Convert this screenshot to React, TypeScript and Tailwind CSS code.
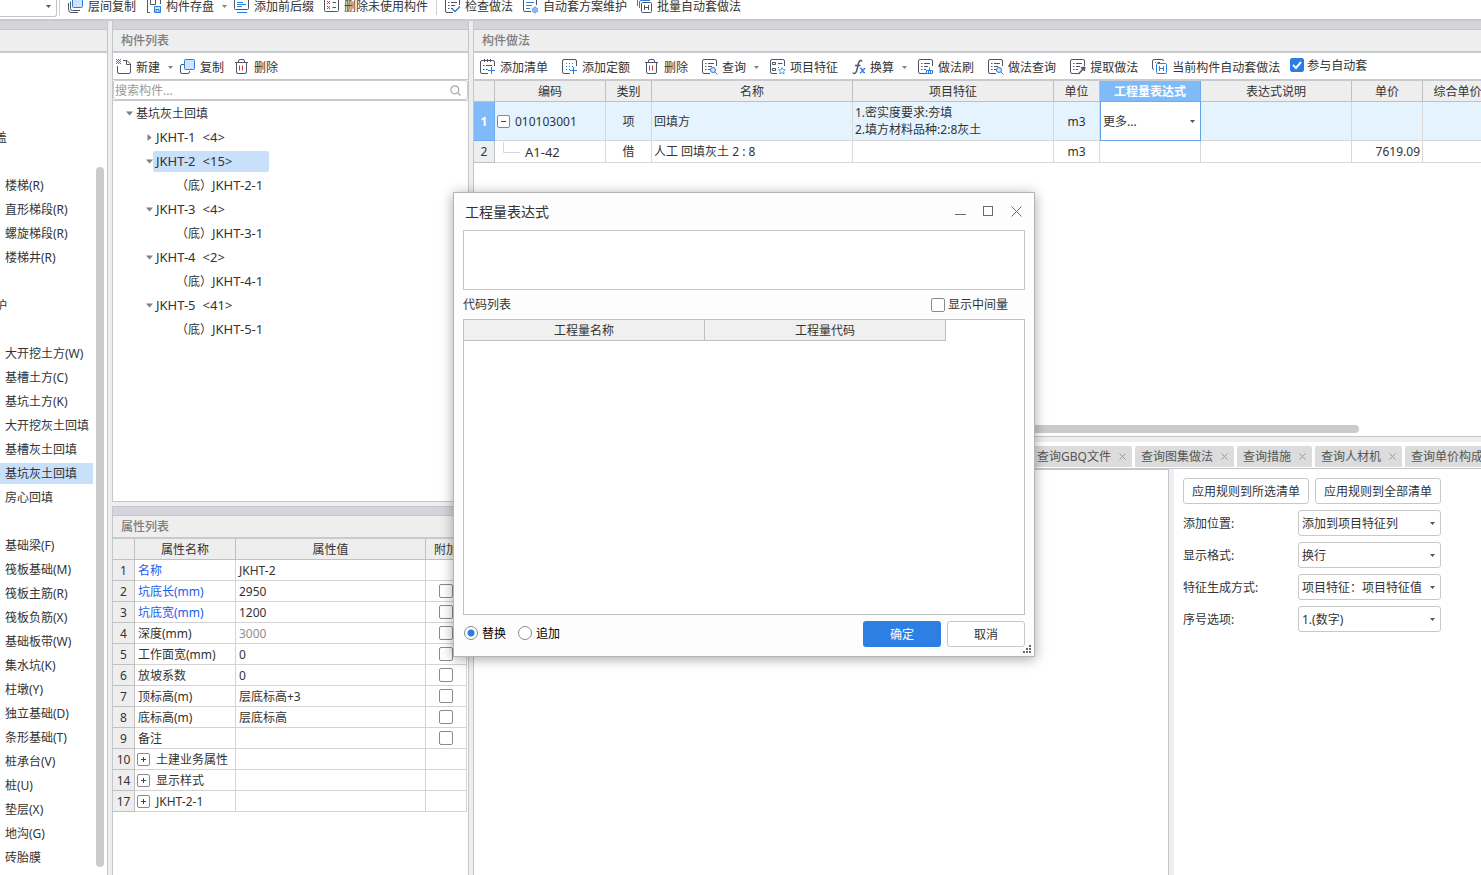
import { useState, type ReactNode } from "react";
import clsx from "clsx";

const INK = "#4d5567";
const BLUE = "#2a7de1";

/** 16px line icon, drawn on the pixel grid. */
function Icon({ width = 16, children }: { width?: number; children: ReactNode }) {
  return (
    <svg width={width} height="16" viewBox={`0 0 ${width} 16`} fill="none" stroke={INK} className="shrink-0">
      {children}
    </svg>
  );
}

/** Sheet outline with its lower right corner left open, plus the list lines. */
function OpenSheet() {
  return (
    <>
      <path d="M8 14.5H2Q.5 14.5 .5 13V2Q.5 .5 2 .5H13Q14.5 .5 14.5 2V7" />
      <path d="M3 4.5h1.5M6 4.5h6M3 7.5h1.5M6 7.5h4M3 10.5h1.5M6 10.5h2" />
    </>
  );
}

const icons = {
  layers: (
    <Icon>
      <path d="M.5 5v6Q.5 14.5 3 14.5h7M2.500 3.500v7Q2.500 12.500 4.500 12.500H12" />
      <rect x="4.500" y="-.5" width="10" height="10" rx="1" fill="#cfe3fc" stroke={BLUE} />
    </Icon>
  ),
  save: (
    <Icon>
      <path d="M4 14.500H1.500V.500H5M4.500 .500v6h5v-6M12 .500h2.500V6" />
      <path d="M8.500 8.500h6v6h-6zM10 14v-2.500h3V14" stroke={BLUE} fill="#cfe3fc" />
    </Icon>
  ),
  prefix: (
    <Icon>
      <rect x=".5" y=".5" width="14" height="11" rx="1" />
      <path d="M3 4.500h6M3 6.500h9M3 8.500h5M3 14.500h10" stroke={BLUE} />
    </Icon>
  ),
  unused: (
    <Icon>
      <rect x=".5" y=".5" width="14" height="13" rx="1" />
      <path d="M3 3l3 3M6 3l-3 3M3 8l3 3M6 8l-3 3" stroke="#e0322d" />
      <path d="M8.500 4.500h3.500M8.500 9.500h3.500" />
    </Icon>
  ),
  check: (
    <Icon>
      <OpenSheet />
      <path d="M7.500 11l2.500 2.500 5-5" stroke={BLUE} strokeWidth="1.500" />
    </Icon>
  ),
  plan: (
    <Icon>
      <path d="M8 13.500H2Q.5 13.500 .5 12V2Q.5 .5 2 .5H12Q13.500 .5 13.500 2V7" />
      <path d="M3 4.500h8M3 7.500h6M3 10.500h4" stroke={BLUE} />
      <circle cx="12" cy="12" r="2.500" stroke="#5b9cf0" fill="#cfe3fc" />
      <path d="M12 8v8M8.500 10l7 4M15.500 10l-7 4" stroke="#5b9cf0" strokeWidth=".6" />
    </Icon>
  ),
  batch: (
    <Icon>
      <path d="M.5 8V2Q.5 .5 2 .5h9M2.500 10V4Q2.500 2.500 4 2.500h9" stroke={BLUE} />
      <rect x="4.500" y="4.500" width="10" height="10" rx="1" fill="#fff" />
      <path d="M7.500 7v5M11.500 7v5M7.500 9.500h4" />
    </Icon>
  ),
  fresh: (
    <Icon>
      <path d="M7 1.500h4l3.500 3.500V13q0 1.500-1.500 1.500H3Q1.500 14.500 1.500 13V7M10.500 1.500v4h4" />
      <path d="M0 .5h5M0 2.500h5M0 4.500h5" stroke={BLUE} strokeDasharray="1 1" />
      <path d="M1 1.500h4M1 3.500h4" stroke={BLUE} strokeDasharray="1 1" />
    </Icon>
  ),
  copy: (
    <Icon>
      <path d="M4 5.500H2Q.5 5.500 .5 7v6q0 1.500 1.500 1.500h6q1.500 0 1.500-1.500v-1" />
      <rect x="4.500" y=".5" width="10" height="10" rx="1" fill="#cfe3fc" stroke={BLUE} />
    </Icon>
  ),
  trash: (
    <Icon>
      <path d="M1 3.500h13M4.500 3V2Q4.500 .5 6 .5h3q1.500 0 1.500 1.500V3M2.500 4v9Q2.500 14.500 4 14.500h7q1.500 0 1.500-1.500V4" />
      <path d="M5.500 6.500v5M8.500 6.500v5" stroke="#e0322d" />
    </Icon>
  ),
  addBill: (
    <Icon>
      <path d="M8 14.500H2Q.5 14.500 .5 13V3Q.5 1.500 2 1.500h11Q14.500 1.500 14.500 3v4M4.500 0v3M7.500 0v3M10.500 0v3" />
      <path d="M3 6.500h1.500M6 6.500h6M3 10.500h1.500M6 10.500h1.500" />
      <path d="M11.500 8v7M8 11.500h7" stroke={BLUE} />
    </Icon>
  ),
  addQuota: (
    <Icon>
      <path d="M8 14.500H2Q.5 14.500 .5 13V2Q.5 .5 2 .5h11Q14.500 .5 14.500 2v5" />
      <path d="M4 4.500h8M4 7.500h8M4 10.500h4" stroke={BLUE} strokeDasharray="1 2" />
      <path d="M11.500 8v7M8 11.500h7" stroke={BLUE} />
    </Icon>
  ),
  query: (
    <Icon>
      <OpenSheet />
      <circle cx="11" cy="11" r="2.500" stroke={BLUE} fill="#cfe3fc" />
      <path d="M13 13l2.500 2.500" stroke={BLUE} />
    </Icon>
  ),
  feature: (
    <Icon>
      <path d="M7 14.500H2Q.5 14.500 .5 13V2Q.5 .5 2 .5h11Q14.500 .5 14.500 2v5" />
      <path d="M2.500 3.500h3v2h-3zM2.500 9.500h3v2h-3zM8 4.500h4.500M8 8.500h1" />
      <path d="M12 8.500l1 2.200 2.300.2-1.700 1.600.5 2.400-2.100-1.200-2.100 1.200.5-2.400-1.700-1.600 2.300-.2z" stroke="#5b9cf0" fill="#fff" />
    </Icon>
  ),
  formula: (
    <Icon width={14}>
      <path d="M10 2.500Q9.500 1.200 8.300 1.500C6.500 2 6.300 5 5.500 8.500S4.200 14.500 2.500 14.500Q1.300 14.500 .8 13.500M3 6.500H8.500" strokeWidth="1.500" />
      <path d="M8 9.500q1.300-.8 2 1.500t2.800 3M13.300 9.500q-1.300 0-2.500 2t-2.800 2.500" stroke={BLUE} strokeWidth="1.400" />
    </Icon>
  ),
  brush: (
    <Icon>
      <OpenSheet />
      <path d="M8.500 14.500V11.500h6v3zM11.500 8.500v3M10.500 12v2M12.500 12v2" stroke={BLUE} />
    </Icon>
  ),
  extract: (
    <Icon>
      <OpenSheet />
      <path d="M8.500 15l4.500-5" strokeWidth="1.500" />
      <path d="M11 8.500l4-.5-.5 4z" fill={INK} />
    </Icon>
  ),
  auto: (
    <Icon>
      <path d="M2 10.500Q.5 10.500 .5 9V2Q.5 .5 2 .5h8q1.500 0 1.500 1.500M3 3.500h1M5.500 3.500H8" />
      <rect x="4.500" y="4.500" width="10" height="10" rx="1" fill="#fff" stroke={BLUE} />
      <path d="M7.500 7v5M11.500 7v5M7.500 9.500h4" stroke={BLUE} />
    </Icon>
  ),
};

type IconName = keyof typeof icons;

function Caret({ className = "" }: { className?: string }) {
  return (
    <svg width="5" height="3" viewBox="0 0 5 3" className={clsx("shrink-0", className)}>
      <path d="M0 0h5L2.500 3z" fill="currentColor" />
    </svg>
  );
}

function Tool({ icon, label, menu }: { icon: IconName; label: string; menu?: boolean }) {
  return (
    <button className={clsx("flex shrink-0 items-center gap-1 whitespace-nowrap", menu && "-mr-[3px]")}>
      {icons[icon]}
      <span className="pt-[2px]">{label}</span>
      {menu && <Caret className="ml-1 text-[#808080]" />}
    </button>
  );
}

function Check({ label, checked }: { label?: string; checked?: boolean }) {
  return (
    <span className="relative inline-flex size-[14px] shrink-0">
      <input
        type="checkbox"
        aria-label={label}
        defaultChecked={checked}
        className="peer size-[14px] appearance-none rounded-[2px] border border-[#8a8a8a] bg-white checked:border-[#2a7de1] checked:bg-[#2a7de1]"
      />
      <svg
        viewBox="0 0 14 14"
        className="pointer-events-none absolute inset-0 hidden peer-checked:block"
        fill="none"
        stroke="#fff"
        strokeWidth="2"
      >
        <path d="M3 7l3 3 5-6" />
      </svg>
    </span>
  );
}

function PanelTitle({ children }: { children?: ReactNode }) {
  return (
    <>
      <div className="h-[9px] shrink-0 border-b border-[#c3c6cc] bg-[#d3d5db]" />
      <h2 className="flex h-[23px] shrink-0 items-center border-b-2 border-[#c8cacd] bg-[#eeeeee] px-2 pt-px font-medium text-[#7d7d7d]">
        {children}
      </h2>
    </>
  );
}

function Expander({ open }: { open?: boolean }) {
  return (
    <button
      aria-label={open ? "收起" : "展开"}
      className="flex size-[13px] shrink-0 items-center justify-center rounded-[2px] border border-[#8a8a8a] bg-white"
    >
      <svg width="7" height="7" viewBox="0 0 7 7" stroke="#444" fill="none">
        <path d={open ? "M1 3.500h5" : "M1 3.500h5M3.500 1v5"} />
      </svg>
    </button>
  );
}

function TopBar() {
  return (
    <header className="flex h-[21px] shrink-0 items-end overflow-hidden border-b-2 border-[#c8cacd] bg-white">
      <div className="flex h-[26px] shrink-0 items-center gap-[10px]">
        <div className="relative flex h-[22px] w-[57px] items-center">
          <select aria-label="楼层" className="h-full w-full appearance-none rounded-r-[3px] border border-l-0 border-[#c4c4c4] bg-white">
            <option></option>
          </select>
          <Caret className="pointer-events-none absolute right-[6px] text-[#4d5567]" />
        </div>
        <span className="-ml-2 h-5 w-px bg-[#d0d0d0]" />
        <div className="-ml-[2px] flex gap-[10px]">
          <Tool icon="layers" label="层间复制" />
          <Tool icon="save" label="构件存盘" menu />
          <Tool icon="prefix" label="添加前后缀" />
          <Tool icon="unused" label="删除未使用构件" />
          <span className="-mx-[2px] w-px bg-[#d0d0d0]" />
          <Tool icon="check" label="检查做法" />
          <Tool icon="plan" label="自动套方案维护" />
          <Tool icon="batch" label="批量自动套做法" />
        </div>
      </div>
    </header>
  );
}

// Empty strings are the group headings whose names lie left of the visible part.
const categories = [
  "", "", "", "盖", "", "楼梯(R)", "直形梯段(R)", "螺旋梯段(R)", "楼梯井(R)", "", "护", "",
  "大开挖土方(W)", "基槽土方(C)", "基坑土方(K)", "大开挖灰土回填", "基槽灰土回填",
  "基坑灰土回填", "房心回填", "", "基础梁(F)", "筏板基础(M)", "筏板主筋(R)", "筏板负筋(X)",
  "基础板带(W)", "集水坑(K)", "柱墩(Y)", "独立基础(D)", "条形基础(T)", "桩承台(V)",
  "桩(U)", "垫层(X)", "地沟(G)", "砖胎膜",
];

function Sidebar() {
  const [active, setActive] = useState("基坑灰土回填");
  return (
    <aside className="flex w-[108px] shrink-0 flex-col border-r border-[#c3c6cc] bg-white">
      <PanelTitle />
      <div className="flex min-h-0 flex-1">
        <ul className="w-[93px] overflow-hidden">
          {categories.map((name, i) => (
            <li key={i} className="flex h-6 items-center">
              {name && (
                <button
                  onClick={() => setActive(name)}
                  className={clsx(
                    "flex h-[21px] w-full items-center whitespace-nowrap pt-px",
                    name.length === 1 ? "-ml-[5px]" : "pl-[5px]",
                    active === name && "bg-[#c9e0fa]",
                  )}
                >
                  {name}
                </button>
              )}
            </li>
          ))}
        </ul>
        <div className="mt-[114px] mb-2 ml-[3px] w-2 rounded-full bg-[#cbcbcb]" />
      </div>
    </aside>
  );
}

const tree = [
  { name: "JKHT-1", count: 4 },
  { name: "JKHT-2", count: 15, child: "JKHT-2-1" },
  { name: "JKHT-3", count: 4, child: "JKHT-3-1" },
  { name: "JKHT-4", count: 2, child: "JKHT-4-1" },
  { name: "JKHT-5", count: 41, child: "JKHT-5-1" },
];

function TreeArrow({ open }: { open?: boolean }) {
  return (
    <svg width="7" height="7" viewBox="0 0 7 7" fill="#7f7f7f" className="shrink-0">
      <path d={open ? "M0 1.500h7L3.500 5.500z" : "M1.500 0v7L5.500 3.500z"} />
    </svg>
  );
}

function ComponentList() {
  const [selected, setSelected] = useState("JKHT-2");
  return (
    <section className="flex h-[481px] shrink-0 flex-col border-x border-b border-[#c3c6cc] bg-white">
      <PanelTitle>构件列表</PanelTitle>
      <div className="flex h-[27px] shrink-0 items-center gap-[10px] border-b border-[#c3c6cc] px-[3px] pt-[2px]">
        <Tool icon="fresh" label="新建" menu />
        <Tool icon="copy" label="复制" />
        <Tool icon="trash" label="删除" />
      </div>
      <div className="relative flex h-5 shrink-0 items-center">
        <input
          aria-label="搜索构件"
          placeholder="搜索构件..."
          className="h-5 w-full rounded-[3px] border border-[#cccccc] px-px placeholder:text-[#9a9a9a] outline-none"
        />
        <svg width="11" height="11" viewBox="0 0 11 11" fill="none" stroke="#a8a8a8" className="absolute right-[7px]">
          <circle cx="4.800" cy="4.800" r="4" strokeWidth="1.200" />
          <path d="M8 8l2.500 2.500" strokeWidth="1.300" />
        </svg>
      </div>
      <ul className="flex-1 border-t border-[#c8c8c8] pl-[13px]">
        <li className="flex h-6 items-center gap-[3px]">
          <TreeArrow open />
          <span className="pt-[2px]">基坑灰土回填</span>
        </li>
        {tree.map(({ name, count, child }) => (
          <li key={name} className="pl-5">
            <div className="flex h-6 items-center">
              <TreeArrow open={!!child} />
              <button
                onClick={() => setSelected(name)}
                className={clsx(
                  "flex h-[21px] w-[116px] items-center gap-[7px] rounded-[2px] pl-[3px] text-[13px]",
                  selected === name && "bg-[#c9e0fa]",
                )}
              >
                <span>{name}</span>
                <span>&lt;{count}&gt;</span>
              </button>
            </div>
            {child && (
              <div className="h-6 pl-[30px] leading-6">
                （底）<span className="text-[13px]">{child}</span>
              </div>
            )}
          </li>
        ))}
      </ul>
    </section>
  );
}

type Prop = { no: number; name: string; value?: string; key?: boolean; muted?: boolean; box?: boolean; group?: boolean };

const props: Prop[] = [
  { no: 1, name: "名称", value: "JKHT-2", key: true },
  { no: 2, name: "坑底长(mm)", value: "2950", key: true, box: true },
  { no: 3, name: "坑底宽(mm)", value: "1200", key: true, box: true },
  { no: 4, name: "深度(mm)", value: "3000", muted: true, box: true },
  { no: 5, name: "工作面宽(mm)", value: "0", box: true },
  { no: 6, name: "放坡系数", value: "0", box: true },
  { no: 7, name: "顶标高(m)", value: "层底标高+3", box: true },
  { no: 8, name: "底标高(m)", value: "层底标高", box: true },
  { no: 9, name: "备注", box: true },
  { no: 10, name: "土建业务属性", group: true },
  { no: 14, name: "显示样式", group: true },
  { no: 17, name: "JKHT-2-1", group: true },
];

function PropertyList() {
  const head = "h-[21px] border-r border-b border-[#c0c0c0] bg-[#eeeeee] p-0 pt-[2px] font-normal";
  const cell = "h-[21px] border-r border-b border-[#d4d4d4] px-[3px] pt-[2px] pb-0";
  return (
    <section className="flex min-h-0 flex-1 flex-col overflow-hidden border-x border-t border-[#c3c6cc] bg-white">
      <PanelTitle>属性列表</PanelTitle>
      <table className="w-[354px] table-fixed border-separate border-spacing-0">
        <colgroup>
          <col className="w-[22px]" />
          <col className="w-[101px]" />
          <col className="w-[190px]" />
          <col className="w-[41px]" />
        </colgroup>
        <thead>
          <tr>
            <th className={head}></th>
            <th className={head}>属性名称</th>
            <th className={head}>属性值</th>
            <th className={head}>附加</th>
          </tr>
        </thead>
        <tbody>
          {props.map((p) => (
            <tr key={p.no}>
              <td className="h-[21px] border-r border-b border-[#c0c0c0] bg-[#eeeeee] p-0 pt-[2px] text-center">{p.no}</td>
              {p.group ? (
                <td className="h-[21px] border-r border-b border-[#d4d4d4] py-0 pr-0 pl-[2px]">
                  <span className="flex items-center gap-[6px] whitespace-nowrap">
                    <Expander />
                    <span className="pt-[2px]">{p.name}</span>
                  </span>
                </td>
              ) : (
                <td className={clsx(cell, p.key && "text-[#1660f0]")}>{p.name}</td>
              )}
              <td className={clsx(cell, p.muted && "text-[#8f8f8f]")}>{p.value}</td>
              <td className="h-[21px] border-r border-b border-[#d4d4d4] p-0">
                <span className="flex justify-center">{p.box && <Check label={`附加 ${p.name}`} />}</span>
              </td>
            </tr>
          ))}
        </tbody>
      </table>
    </section>
  );
}

const columns = ["编码", "类别", "名称", "项目特征", "单位", "工程量表达式", "表达式说明", "单价", "综合单价"];

function MethodTable() {
  const cell = "border-r border-b border-[#d9d9d9] px-[2px] py-0";
  return (
    <table className="w-[1019px] shrink-0 table-fixed border-separate border-spacing-0">
      <colgroup>
        <col className="w-[21px]" />
        <col className="w-[111px]" />
        <col className="w-[46px]" />
        <col className="w-[201px]" />
        <col className="w-[201px]" />
        <col className="w-[46px]" />
        <col className="w-[101px]" />
        <col className="w-[151px]" />
        <col className="w-[71px]" />
        <col className="w-[70px]" />
      </colgroup>
      <thead>
        <tr>
          <th className="h-[21px] border-r border-b border-[#c0c0c0] bg-[#eeeeee] p-0"></th>
          {columns.map((c) => (
            <th
              key={c}
              className={clsx(
                "h-[21px] border-r border-b p-0 pt-[2px]",
                c === "工程量表达式"
                  ? "border-[#6aabf2] bg-[#80baf9] font-bold text-white"
                  : "border-[#c0c0c0] bg-[#eeeeee] font-normal",
              )}
            >
              {c}
            </th>
          ))}
        </tr>
      </thead>
      <tbody>
        <tr className="h-[39px] bg-[#e5f3ff]">
          <td className="border-r border-b border-[#6aabf2] bg-[#80baf9] p-0 pt-[2px] text-center font-bold text-white">1</td>
          <td className={cell}>
            <span className="flex items-center gap-[5px]">
              <Expander open />
              <span className="pt-[2px]">010103001</span>
            </span>
          </td>
          <td className={clsx(cell, "pt-[2px] text-center")}>项</td>
          <td className={clsx(cell, "pt-[2px]")}>回填方</td>
          <td className={clsx(cell, "leading-[17px]")}>
            1.密实度要求:夯填
            <br />
            2.填方材料品种:2:8灰土
          </td>
          <td className={clsx(cell, "pt-[2px] text-center")}>m3</td>
          <td className="border border-t-0 border-[#62a3ea] bg-white p-0">
            <span className="relative flex items-center">
              <select aria-label="工程量表达式" className="h-[37px] w-full appearance-none pt-[2px] pl-[2px] outline-none">
                <option>更多...</option>
              </select>
              <Caret className="pointer-events-none absolute right-[5px] text-[#4d5567]" />
            </span>
          </td>
          <td className={cell}></td>
          <td className={cell}></td>
          <td className={cell}></td>
        </tr>
        <tr className="h-[22px]">
          <td className="border-r border-b border-[#c0c0c0] bg-[#eeeeee] p-0 pt-px text-center">2</td>
          <td className={cell}>
            <span className="flex items-center gap-[5px] pl-[6px]">
              <svg width="17" height="20" viewBox="0 0 17 20" fill="none" stroke="#d9d9d9">
                <path d="M.5 0v10.500H17" />
              </svg>
              <span className="text-[13px]">A1-42</span>
            </span>
          </td>
          <td className={clsx(cell, "text-center")}>借</td>
          <td className={cell}>人工 回填灰土 2 : 8</td>
          <td className={cell}></td>
          <td className={clsx(cell, "text-center")}>m3</td>
          <td className={cell}></td>
          <td className={cell}></td>
          <td className={clsx(cell, "text-right")}>7619.09</td>
          <td className={cell}></td>
        </tr>
      </tbody>
    </table>
  );
}

function MethodPanel() {
  return (
    <section className="flex h-[416px] shrink-0 flex-col overflow-hidden border-b border-l border-[#c3c6cc] bg-white">
      <PanelTitle>构件做法</PanelTitle>
      <div className="flex h-7 shrink-0 items-center gap-[14px] border-b-2 border-[#c8cacd] pt-[2px] pl-[6px]">
        <Tool icon="addBill" label="添加清单" />
        <Tool icon="addQuota" label="添加定额" />
        <Tool icon="trash" label="删除" />
        <Tool icon="query" label="查询" menu />
        <Tool icon="feature" label="项目特征" />
        <Tool icon="formula" label="换算" menu />
        <Tool icon="brush" label="做法刷" />
        <Tool icon="query" label="做法查询" />
        <Tool icon="extract" label="提取做法" />
        <Tool icon="auto" label="当前构件自动套做法" />
        <label className="-ml-1 flex shrink-0 items-center gap-[3px] pb-1 whitespace-nowrap">
          <Check checked />
          <span className="pt-[2px]">参与自动套</span>
        </label>
      </div>
      <MethodTable />
      <div className="mt-auto mr-[122px] mb-[3px] ml-2 h-2 shrink-0 rounded-full bg-[#cbcbcb]" />
    </section>
  );
}

const tabs = ["查询GBQ文件", "查询图集做法", "查询措施", "查询人材机", "查询单价构成"];

const options = [
  { id: "position", label: "添加位置:", value: "添加到项目特征列" },
  { id: "format", label: "显示格式:", value: "换行" },
  { id: "generate", label: "特征生成方式:", value: "项目特征：项目特征值" },
  { id: "number", label: "序号选项:", value: "1.(数字)" },
];

function QueryPanel() {
  const button = "h-[26px] flex-1 whitespace-nowrap rounded-[3px] border border-[#c8c8c8] bg-white pt-px";
  return (
    <section className="flex min-h-0 flex-1 flex-col overflow-hidden border-l border-[#c3c6cc] bg-white">
      <nav className="flex h-[27px] shrink-0 items-start gap-[3px] border-b border-[#c3c6cc] pt-1 pl-[557px]">
        {tabs.map((t) => (
          <span key={t} className="flex h-[21px] shrink-0 items-center gap-2 rounded-t-[2px] bg-[#dcdcdc] px-[6px] text-[#555555]">
            <button className="whitespace-nowrap">{t}</button>
            <button aria-label={`关闭 ${t}`}>
              <svg width="7" height="7" viewBox="0 0 7 7" stroke="#999">
                <path d="M.5 .5l6 6M6.500 .5l-6 6" />
              </svg>
            </button>
          </span>
        ))}
      </nav>
      <div className="flex min-h-0 flex-1">
        <div className="flex-1 border-t border-r border-[#c3c6cc]" />
        <div className="w-[5px] bg-[#eeeeee]" />
        <div className="flex w-[307px] flex-col gap-[6px] py-[9px] pr-10 pl-[9px]">
          <div className="flex gap-[6px]">
            <button className={button}>应用规则到所选清单</button>
            <button className={button}>应用规则到全部清单</button>
          </div>
          {options.map((o) => (
            <div key={o.id} className="flex items-center justify-between">
              <label htmlFor={o.id} className="pt-[2px]">
                {o.label}
              </label>
              <span className="relative flex w-[143px] items-center">
                <select
                  id={o.id}
                  className="h-[26px] w-full appearance-none rounded-[3px] border border-[#c8c8c8] bg-white pt-[2px] pl-[3px] outline-none"
                >
                  <option>{o.value}</option>
                </select>
                <Caret className="pointer-events-none absolute right-[6px] text-[#4d5567]" />
              </span>
            </div>
          ))}
        </div>
      </div>
    </section>
  );
}

function ExpressionDialog() {
  const [mode, setMode] = useState("替换");
  const head = "h-[21px] border-r border-b border-[#c0c0c0] bg-[#f0f0f0] p-0 pt-[2px] font-normal";
  return (
    <div
      role="dialog"
      aria-label="工程量表达式"
      className="absolute top-[192px] left-[453px] flex h-[465px] w-[582px] flex-col border border-[#b5b5b5] bg-[#fdfdfd] px-[9px] shadow-[0_2px_12px_rgba(0,0,0,0.35)]"
    >
      <div className="flex h-[37px] shrink-0 items-center justify-between pl-[2px]">
        <h1 className="text-[14px]">工程量表达式</h1>
        <div className="flex gap-[17px] pr-[3px] text-[#6b6b6b]">
          <button aria-label="最小化">
            <svg width="11" height="11" viewBox="0 0 11 11" stroke="currentColor">
              <path d="M0 8.500h11" />
            </svg>
          </button>
          <button aria-label="最大化">
            <svg width="11" height="11" viewBox="0 0 11 11" stroke="currentColor" fill="none">
              <rect x=".5" y=".5" width="9" height="9" />
            </svg>
          </button>
          <button aria-label="关闭">
            <svg width="11" height="11" viewBox="0 0 11 11" stroke="currentColor">
              <path d="M.5 .5l10 10M10.500 .5l-10 10" />
            </svg>
          </button>
        </div>
      </div>
      <textarea aria-label="表达式" className="h-[60px] shrink-0 resize-none border border-[#c4c4c4] bg-white outline-none" />
      <div className="flex h-[29px] shrink-0 items-center justify-between pr-[17px]">
        <span>代码列表</span>
        <label className="flex items-center gap-[3px]">
          <Check />
          显示中间量
        </label>
      </div>
      <div className="min-h-0 flex-1 border border-[#c0c0c0] bg-white">
        <table className="w-[482px] table-fixed border-separate border-spacing-0">
          <thead>
            <tr>
              <th className={head}>工程量名称</th>
              <th className={head}>工程量代码</th>
            </tr>
          </thead>
        </table>
      </div>
      <div className="flex h-[41px] shrink-0 items-start gap-[6px] pt-[6px]">
        <div className="mr-auto flex h-6 items-center gap-3 pl-px text-black">
          {["替换", "追加"].map((m) => (
            <label key={m} className="flex items-center gap-1">
              <input
                type="radio"
                name="mode"
                checked={mode === m}
                onChange={() => setMode(m)}
                className="size-[14px] appearance-none rounded-full border border-[#8a8a8a] bg-white checked:bg-[radial-gradient(circle,#2a7de1_0_3px,#fff_4px)]"
              />
              <span className="pt-[2px]">{m}</span>
            </label>
          ))}
        </div>
        <button className="h-[26px] w-[78px] rounded-[3px] bg-[#2d7fe3] pt-[2px] text-white">确定</button>
        <button className="h-[26px] w-[78px] rounded-[3px] border border-[#c8c8c8] bg-white pt-[2px]">取消</button>
      </div>
      <svg width="8" height="8" viewBox="0 0 8 8" fill="#6b6b6b" className="absolute right-[3px] bottom-[3px]">
        <path d="M6 0h2v2H6zM3 3h2v2H3zM6 3h2v2H6zM0 6h2v2H0zM3 6h2v2H3zM6 6h2v2H6z" />
      </svg>
    </div>
  );
}

export default function App() {
  return (
    <div className="relative flex h-screen flex-col overflow-hidden bg-[#eeeeee] font-['Noto_Sans','Noto_Sans_CJK_SC',sans-serif] text-[12px] leading-[16px] text-[#333333]">
      <TopBar />
      <main className="flex min-h-0 flex-1 gap-1">
        <Sidebar />
        <div className="flex w-[357px] shrink-0 flex-col gap-1">
          <ComponentList />
          <PropertyList />
        </div>
        <div className="flex min-w-0 flex-1 flex-col gap-[5px]">
          <MethodPanel />
          <QueryPanel />
        </div>
      </main>
      <ExpressionDialog />
    </div>
  );
}
